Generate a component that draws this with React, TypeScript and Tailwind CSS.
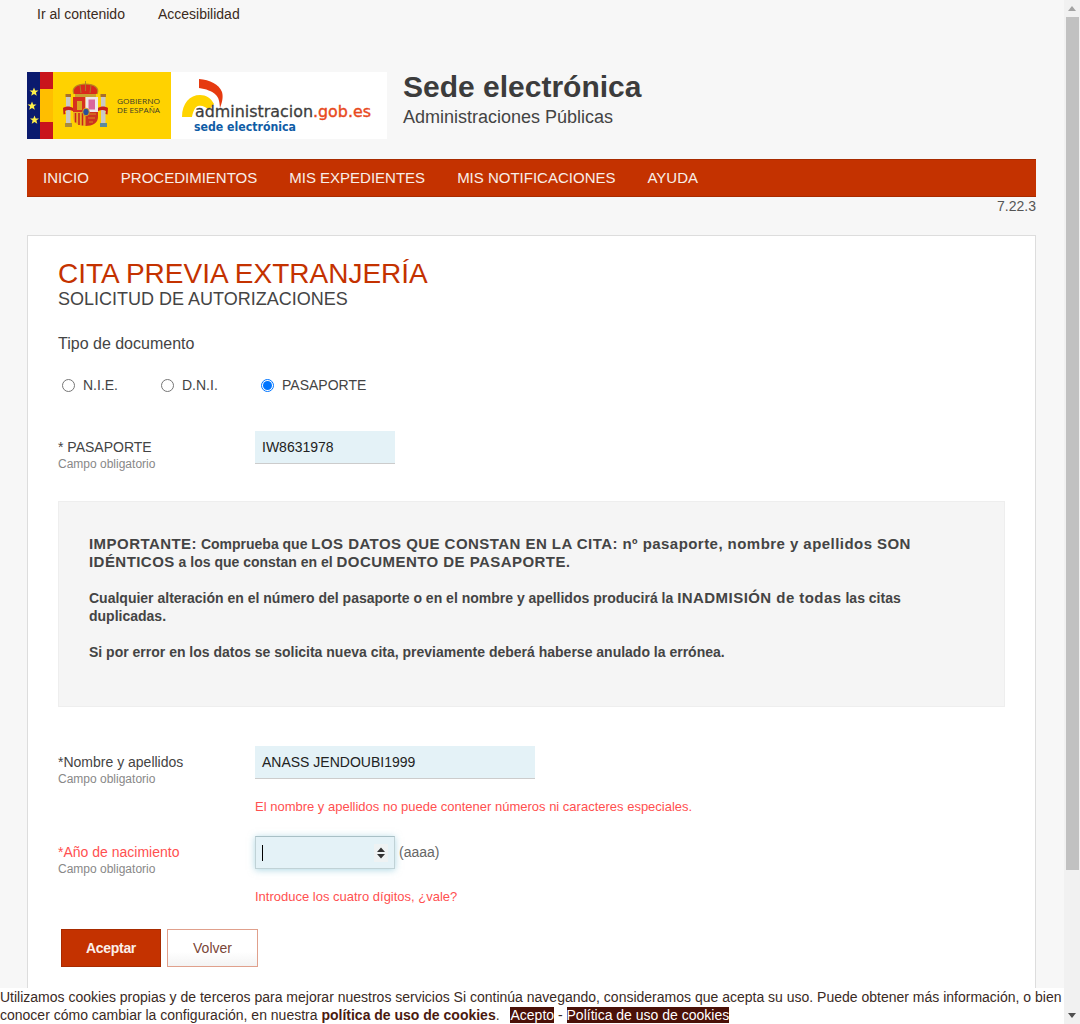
import React from "react";

const font = { fontFamily: '"Liberation Sans", Arial, sans-serif' };
const STAR = "M0 -4.600L1.200 -1.500L4.500 -1.400L1.900 0.600L2.800 3.800L0 2L-2.800 3.800L-1.900 0.600L-4.500 -1.400L-1.200 -1.500Z";

function Logo() {
  return (
    <svg width="360" height="67" viewBox="0 0 360 67" className="block shrink-0">
      <rect width="360" height="67" fill="#ffffff" />
      <rect width="144" height="67" fill="#ffd200" />
      <rect width="13" height="67" fill="#0a1a6e" />
      <rect x="13" width="13" height="67" fill="#c9141c" />
      <rect x="13" y="17" width="13" height="33" fill="#ffbe00" />
      <g fill="#fff04a">
        <path d={STAR} transform="translate(7 20)" />
        <path d={STAR} transform="translate(5 34)" />
        <path d={STAR} transform="translate(7.500 48)" />
      </g>
      {/* coat of arms */}
      <g>
        <rect x="39" y="25" width="4.500" height="26" fill="#c9c9c6" />
        <rect x="74" y="25" width="4.500" height="26" fill="#c9c9c6" />
        <rect x="38.500" y="22" width="5.500" height="3" fill="#a8702a" />
        <rect x="73.500" y="22" width="5.500" height="3" fill="#a8702a" />
        <rect x="38" y="51" width="7" height="4" fill="#a98c3a" />
        <rect x="73" y="51" width="7" height="4" fill="#5d8a9c" />
        <path d="M47 22c-3-6 3-10 11.500-10S73 16 70 22z" fill="#d92a1c" />
        <path d="M47 22c-3-6 3-10 11.500-10S73 16 70 22" fill="none" stroke="#b88a1e" strokeWidth="1.100" />
        <path d="M58.500 9v10M53 13l1 8M64 13l-1 8" stroke="#a98428" strokeWidth="0.900" />
        <rect x="48" y="22" width="21" height="3" fill="#c9a030" />
        <path d="M46 25h12.500v15H46z" fill="#d6301f" />
        <path d="M58.500 25H71v15H58.500z" fill="#eee6ea" />
        <path d="M61.500 27.500h6.500v10h-6.500z" fill="#d9659c" />
        <path d="M50 29h5v9h-5z" fill="#d9a520" />
        <path d="M46 40h12.500v14c-7 0-12.500-3-12.500-9z" fill="#e8b020" />
        <path d="M48.500 41v9.500M52 41v12M55.500 41v12.500" stroke="#c8201c" strokeWidth="1.500" />
        <path d="M58.500 40H71v5c0 6-5.500 9-12.500 9z" fill="#cc3320" />
        <path d="M60 42h9M61 46h7M62 50h4" stroke="#d9a520" strokeWidth="0.800" />
        <ellipse cx="59" cy="40" rx="3.300" ry="3.800" fill="#2a4f9a" stroke="#d9a520" />
        <path d="M36 36c3-2 7-2 10 0v3c-3-1.500-6-1.500-8 0l.5 3-2 .5zM81 36c-3-2-7-2-10 0v3c3-1.500 6-1.500 8 0l-.5 3 2 .5z" fill="#c8201c" />
      </g>
      <text x="90" y="31.500" fontFamily='"Open Sans", sans-serif' fontSize="8" fill="#3a3a2a" textLength="43" lengthAdjust="spacingAndGlyphs">GOBIERNO</text>
      <text x="90" y="41" fontFamily='"Open Sans", sans-serif' fontSize="8" fill="#3a3a2a" textLength="43" lengthAdjust="spacingAndGlyphs">DE ESPAÑA</text>
      {/* administracion mark */}
      <path d="M155 45c0-14 8-22 18-22 6 0 11 3 14 9l-5 6c-3-3-7-5-11-4-3 1-5 5-6 11z" fill="#ffd400" />
      <path d="M172 7c11 1 20 5 23 13 1.500 5 0 11-2 16-.5-6-1-10-4-13-4-4-10-6-17-7z" fill="#e63a10" />
      <text x="168" y="45" fontFamily='"DejaVu Sans", sans-serif' fontSize="16.500" fill="#3d3d3d" stroke="#3d3d3d" strokeWidth="0.300" textLength="118" lengthAdjust="spacingAndGlyphs">administracion</text>
      <text x="286" y="45" fontFamily='"DejaVu Sans", sans-serif' fontSize="16.500" fill="#e8491d" stroke="#e8491d" strokeWidth="0.400" textLength="58" lengthAdjust="spacingAndGlyphs">.gob.es</text>
      <text x="167" y="59" fontFamily='"DejaVu Sans", sans-serif' fontSize="12" fontWeight="700" fill="#0f5ca6" textLength="102" lengthAdjust="spacingAndGlyphs">sede electrónica</text>
    </svg>
  );
}

function Radio({ label, checked, className }: { label: string; checked?: boolean; className: string }) {
  return (
    <label className={`flex items-center ${className}`}>
      <span className={`w-[13px] h-[13px] rounded-full border flex items-center justify-center shrink-0 bg-white ${checked ? "border-[#0075ff]" : "border-[#767676]"}`}>
        {checked && <span className="w-[9px] h-[9px] rounded-full bg-[#0075ff]" />}
      </span>
      <span className="ml-[8px] text-[14px] text-[#444]">{label}</span>
    </label>
  );
}

function FieldLabel({ text, error }: { text: string; error?: boolean }) {
  return (
    <div className="w-[197px] shrink-0">
      <div className={`text-[14px] leading-[18px] ${error ? "text-[#ff5050]" : "text-[#444]"}`}>{text}</div>
      <div className="text-[12px] leading-[16px] text-[#888]">Campo obligatorio</div>
    </div>
  );
}

export default function App() {
  const b = "font-bold text-[15px] leading-[18px] tracking-[0.45px] text-[#444]";
  const menu = ["INICIO", "PROCEDIMIENTOS", "MIS EXPEDIENTES", "MIS NOTIFICACIONES", "AYUDA"];
  return (
    <div className="flex h-screen overflow-hidden bg-[#f7f7f7]" style={font}>
      <main className="relative flex-1 min-w-0 flex flex-col px-[27px] overflow-hidden">
        <div className="flex h-[28px] items-center pl-[10px] gap-[33px] text-[14px] text-[#3b2a20] shrink-0">
          <a>Ir al contenido</a>
          <a>Accesibilidad</a>
        </div>
        <header className="flex mt-[44px] h-[67px] shrink-0">
          <Logo />
          <div className="ml-[16px] text-[#3c3c3c]">
            <div className="text-[30px] leading-[29px] font-bold">Sede electrónica</div>
            <div className="text-[18px] leading-[24px] mt-[4px] text-[#444]">Administraciones Públicas</div>
          </div>
        </header>
        <nav className="mt-[20px] h-[38px] w-[1009px] shrink-0 bg-[#c43200] border-y border-[#a82b00] flex items-center">
          {menu.map((m) => (
            <a key={m} className="px-[16px] text-[15px] text-[#f8eee8]">{m}</a>
          ))}
        </nav>
        <div className="w-[1009px] text-right text-[14px] leading-[18px] text-[#555] shrink-0">7.22.3</div>
        <section className="mt-[20px] w-[1009px] flex-1 bg-white border border-[#ddd] px-[30px] pt-[22px]">
          <h1 className="text-[28px] leading-[31px] text-[#c43200]">CITA PREVIA EXTRANJERÍA</h1>
          <h2 className="text-[18px] leading-[20px] text-[#444]">SOLICITUD DE AUTORIZACIONES</h2>
          <div className="mt-[25px] text-[16px] leading-[20px] text-[#444]">Tipo de documento</div>
          <div className="mt-[21px] flex h-[20px] items-center pl-[4px]">
            <Radio label="N.I.E." className="w-[99px]" />
            <Radio label="D.N.I." className="w-[100px]" />
            <Radio label="PASAPORTE" checked className="w-[120px]" />
          </div>
          <div className="mt-[36px] flex">
            <div className="pt-[7px]"><FieldLabel text="* PASAPORTE" /></div>
            <div className="w-[140px] h-[33px] bg-[#e4f2f7] border-b border-[#ccc] px-[7px] flex items-center text-[14px] text-[#222]">IW8631978</div>
          </div>
          <div className="mt-[29px] h-[206px] bg-[#f5f5f5] border border-[#eee] pl-[30px] pr-[60px] pt-[33px] text-[14px] leading-[18px] font-semibold text-[#444] w-[947px]">
            <p>
              <strong className={b}>IMPORTANTE:</strong> Comprueba que <strong className={b}>LOS DATOS QUE CONSTAN EN LA CITA: nº pasaporte, nombre y apellidos SON IDÉNTICOS</strong> a los que constan en el <strong className={b}>DOCUMENTO DE PASAPORTE</strong>.
            </p>
            <p className="mt-[18px]">
              Cualquier alteración en el número del pasaporte o en el nombre y apellidos producirá la <strong className={b}>INADMISIÓN de todas</strong> las citas duplicadas.
            </p>
            <p className="mt-[18px]">Si por error en los datos se solicita nueva cita, previamente deberá haberse anulado la errónea.</p>
          </div>
          <div className="mt-[39px] flex">
            <div className="pt-[7px]"><FieldLabel text="*Nombre y apellidos" /></div>
            <div className="w-[280px] h-[33px] bg-[#e4f2f7] border-b border-[#ccc] px-[7px] flex items-center text-[14px] text-[#222]">ANASS JENDOUBI1999</div>
          </div>
          <div className="mt-[12px] ml-[197px] text-[13px] leading-[16px] text-[#ff5050]">El nombre y apellidos no puede contener números ni caracteres especiales.</div>
          <div className="mt-[21px] flex">
            <div className="pt-[7px]"><FieldLabel text="*Año de nacimiento" error /></div>
            <div className="w-[140px] h-[33px] bg-[#e4f2f7] border border-[#c0d2d6] border-t-[#a9c0c6] shadow-[0_1px_7px_rgba(120,190,210,0.6)] flex items-center justify-between pl-[6px] pr-[6px]">
              <span className="w-px h-[16px] bg-black" />
              <svg width="14" height="18" viewBox="0 0 14 18" className="bg-[#eef2f3]">
                <path d="M7 3.500l4 4.500H3zM7 14.500L3 10h8z" fill="#333" />
              </svg>
            </div>
            <span className="ml-[4px] text-[14px] leading-[33px] text-[#666]">(aaaa)</span>
          </div>
          <div className="mt-[12px] ml-[197px] text-[13px] leading-[16px] text-[#ff5050]">Introduce los cuatro dígitos, ¿vale?</div>
          <div className="mt-[24px] flex ml-[3px] gap-[6px]">
            <button className="w-[100px] h-[38px] bg-[#c43200] border border-[#a82b00] text-[14px] font-semibold tracking-[-0.3px] text-[#fbefe9]">Aceptar</button>
            <button className="w-[91px] h-[38px] border border-[#e0a08c] bg-gradient-to-b from-white from-60% to-[#f3f3f3] text-[14px] text-[#7a4638]">Volver</button>
          </div>
        </section>
        <div className="absolute left-0 right-0 bottom-0 h-[36px] bg-white text-[14px] leading-[18px] text-[#3a2a24]">
          Utilizamos cookies propias y de terceros para mejorar nuestros servicios Si continúa navegando, consideramos que acepta su uso. Puede obtener más información, o bien conocer cómo cambiar la configuración, en nuestra <b className="text-[#4a1a10]">política de uso de cookies</b>. <span className="ml-[7px] bg-[#4a1108] text-white">Acepto</span> - <span className="bg-[#4a1108] text-white">Política de uso de cookies</span>
        </div>
      </main>
      <aside className="w-[16px] shrink-0 bg-[#f1f1f1] flex flex-col items-center">
        <svg width="16" height="17" viewBox="0 0 16 17" className="shrink-0"><path d="M8 6l4 5H4z" fill="#a3a3a3" /></svg>
        <div className="w-[13px] h-[853px] bg-[#c1c1c1] shrink-0" />
        <div className="flex-1" />
        <svg width="16" height="17" viewBox="0 0 16 17" className="shrink-0"><path d="M8 11L4 6h8z" fill="#505050" /></svg>
      </aside>
    </div>
  );
}
